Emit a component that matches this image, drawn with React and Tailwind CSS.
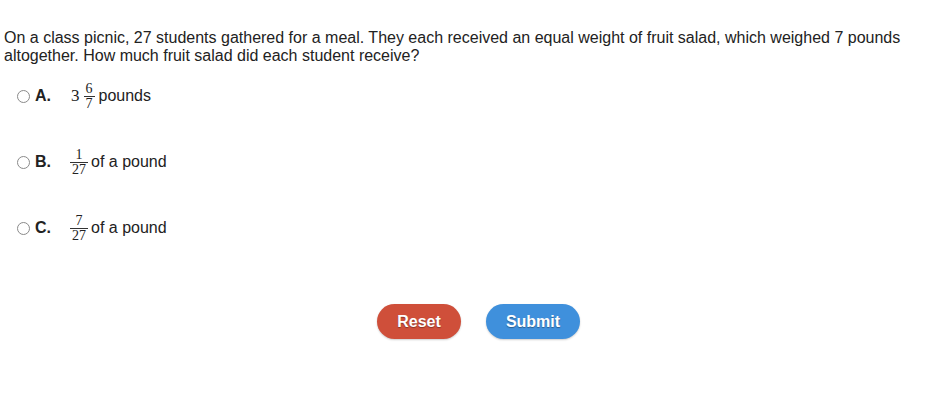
import { useState } from 'react';

function Frac({ num, den }) {
  return (
    <span className="inline-flex flex-col items-center align-middle text-[14px] leading-[14px] font-['Liberation_Serif',serif]">
      <span className="px-[2px]">{num}</span>
      <span className="self-stretch border-t border-[#333]"></span>
      <span className="px-[2px]">{den}</span>
    </span>
  );
}

const options = [
  {
    key: 'A',
    body: (
      <>
        <span className="ml-[1px] mr-[4px] text-[17px] font-['Liberation_Serif',serif]">3</span>
        <Frac num="6" den="7" />
        <span className="ml-[4px]">pounds</span>
      </>
    ),
  },
  { key: 'B', body: (<><Frac num="1" den="27" /><span className="ml-[3px]">of a pound</span></>) },
  { key: 'C', body: (<><Frac num="7" den="27" /><span className="ml-[3px]">of a pound</span></>) },
];

export default function App() {
  const [choice, setChoice] = useState(null);

  return (
    <div className="w-[939px] h-[416px] bg-white text-[#222] font-['Liberation_Sans',Arial,sans-serif] text-[16px] leading-[18px]">
      <p className="pt-[29px] pl-[4px] pr-[30px]">
        On a class picnic, 27 students gathered for a meal. They each received an equal weight of fruit salad, which weighed 7
        pounds altogether. How much fruit salad did each student receive?
      </p>
      <div className="flex flex-col pl-[17px] mt-[16px]">
        {options.map((o) => (
          <label key={o.key} className="flex items-center h-[30px] mb-[36px] cursor-pointer">
            <input
              type="radio"
              name="answer"
              checked={choice === o.key}
              onChange={() => setChoice(o.key)}
              className="appearance-none w-[13px] h-[13px] rounded-full border border-[#8a8a8a] bg-white checked:bg-[#3a7bd5] checked:border-[#3a7bd5]"
            />
            <span className="ml-[5px] w-[35px] font-bold">{o.key}.</span>
            <span className="flex items-center">{o.body}</span>
          </label>
        ))}
      </div>
      <div className="flex justify-center gap-[25px] mt-[25px] pl-[18px]">
        <button className="w-[84px] h-[35px] rounded-full bg-[#cf4f3a] text-white font-bold text-[16px] [text-shadow:0_1px_1px_rgba(0,0,0,0.35)] shadow-[0_1px_2px_rgba(0,0,0,0.2)]">
          Reset
        </button>
        <button className="w-[94px] h-[35px] rounded-full bg-[#3f90dc] text-white font-bold text-[16px] [text-shadow:0_1px_1px_rgba(0,0,0,0.35)] shadow-[0_1px_2px_rgba(0,0,0,0.2)]">
          Submit
        </button>
      </div>
    </div>
  );
}
